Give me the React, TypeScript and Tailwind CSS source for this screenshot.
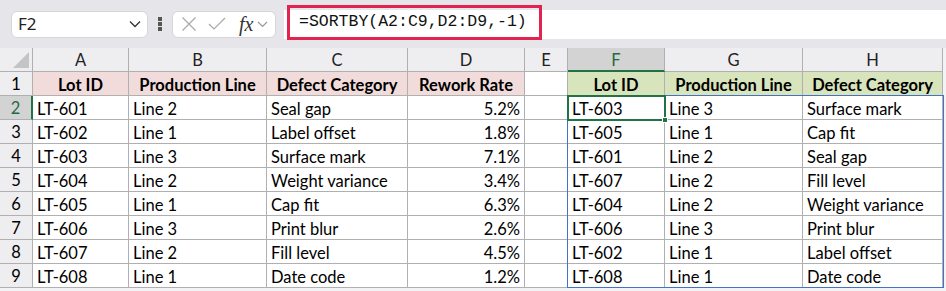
import React from "react";

const cols = ["A", "B", "C", "D", "E", "F", "G", "H"];

const left = [
    ["LT-601", "Line 2", "Seal gap", "5.2%"],
    ["LT-602", "Line 1", "Label offset", "1.8%"],
    ["LT-603", "Line 3", "Surface mark", "7.1%"],
    ["LT-604", "Line 2", "Weight variance", "3.4%"],
    ["LT-605", "Line 1", "Cap fit", "6.3%"],
    ["LT-606", "Line 3", "Print blur", "2.6%"],
    ["LT-607", "Line 2", "Fill level", "4.5%"],
    ["LT-608", "Line 1", "Date code", "1.2%"],
];

const right = [
    ["LT-603", "Line 3", "Surface mark"],
    ["LT-605", "Line 1", "Cap fit"],
    ["LT-601", "Line 2", "Seal gap"],
    ["LT-607", "Line 2", "Fill level"],
    ["LT-604", "Line 2", "Weight variance"],
    ["LT-606", "Line 3", "Print blur"],
    ["LT-602", "Line 1", "Label offset"],
    ["LT-608", "Line 1", "Date code"],
];

const cell = "h-[24px] border-r border-b border-[#b0b0b0] px-[4px] pt-[3px] flex items-center whitespace-nowrap overflow-hidden";
const head = "h-[24px] pt-[2px] flex items-center justify-center";

const Toolbar = () => (
    <div className="h-[48px] bg-[#e6e6ea] flex items-center relative">
        <div className="ml-[11px] w-[137px] h-[27px] bg-white rounded-md border border-[#d6d6da] flex items-center justify-between px-[6px]">
            <span className="text-[17px] text-[#222] font-['Noto_Sans',sans-serif]">F2</span>
            <svg width="12" height="8" viewBox="0 0 12 8"><path d="M1 1.5l5 5 5-5" fill="none" stroke="#333" strokeWidth="1.3" /></svg>
        </div>
        <div className="mx-[10px] flex flex-col gap-[1.5px]">
            <span className="w-[4px] h-[3.5px] bg-[#555]" />
            <span className="w-[4px] h-[3.5px] bg-[#555]" />
            <span className="w-[4px] h-[3.5px] bg-[#555]" />
        </div>
        <div className="w-[104px] h-[27px] bg-white rounded-md border border-[#d6d6da] flex items-center pl-[8px] gap-[11px]">
            <svg width="16" height="16" viewBox="0 0 16 16"><path d="M1.5 1.5l13 13M14.5 1.5l-13 13" stroke="#a8a8a8" strokeWidth="1.2" /></svg>
            <svg width="18" height="16" viewBox="0 0 18 16"><path d="M1 8l5 5L17 2" fill="none" stroke="#a8a8a8" strokeWidth="1.2" /></svg>
            <span className="italic text-[20px] leading-none text-[#333] font-['Liberation_Serif',serif] ml-[2px]">fx</span>
            <svg width="11" height="7" viewBox="0 0 11 7" className="-ml-[7px]"><path d="M1 1l4.5 4.5L10 1" fill="none" stroke="#999" strokeWidth="1.2" /></svg>
        </div>
        <div className="ml-[8px] flex-1 h-[29px] bg-white self-center" />
        <div className="absolute left-[287px] top-[5px] w-[255px] h-[35px] border-[3px] border-[#e2224f] flex items-center pl-[9px]">
            <span className="text-[16.5px] text-[#111] font-['Liberation_Mono',monospace]">=SORTBY(A2:C9,D2:D9,-1)</span>
        </div>
    </div>
);

const Sheet = () => (
    <div className="relative font-['Lato',sans-serif] text-[16.5px] text-black">
        <div className="grid grid-cols-[33px_96px_138px_141px_117px_43px_97px_138px_140px]">
            <div className="h-[24px] bg-[#eeeef1] border-r border-b border-[#b0b0b0] flex items-end justify-end p-[3px]">
                <svg width="16" height="16" viewBox="0 0 16 16"><path d="M16 0v16H0z" fill="#c4c4c4" /></svg>
            </div>
            {cols.map((c) => (
                <div
                    key={c}
                    className={
                        c === "F"
                            ? head + " bg-[#d3d3d3] border-r border-b-2 border-b-[#217346] border-r-[#b0b0b0] text-[#1e6b3e]"
                            : head + " bg-[#eeeef1] border-r border-b border-[#b0b0b0] text-[#222]"
                    }
                >
                    {c}
                </div>
            ))}

            <div className={head + " bg-[#eeeef1] border-r border-b border-[#b0b0b0]"}>1</div>
            {["Lot ID", "Production Line", "Defect Category", "Rework Rate"].map((h) => (
                <div key={h} className={cell + " bg-[#f2dcdb] justify-center font-bold"}>{h}</div>
            ))}
            <div className={cell + " bg-white"} />
            {["Lot ID", "Production Line", "Defect Category"].map((h) => (
                <div key={"r" + h} className={cell + " bg-[#d8e4bc] justify-center font-bold"}>{h}</div>
            ))}

            {left.map((row, i) => (
                <React.Fragment key={i}>
                    <div
                        className={
                            i === 0
                                ? head + " bg-[#d3d3d3] border-r-2 border-r-[#217346] border-b border-b-[#b0b0b0] text-[#1e6b3e]"
                                : head + " bg-[#eeeef1] border-r border-b border-[#b0b0b0]"
                        }
                    >
                        {i + 2}
                    </div>
                    <div className={cell + " bg-white"}>{row[0]}</div>
                    <div className={cell + " bg-white"}>{row[1]}</div>
                    <div className={cell + " bg-white"}>{row[2]}</div>
                    <div className={cell + " bg-white justify-end"}>{row[3]}</div>
                    <div className={cell + " bg-white"} />
                    <div className={cell + " bg-white"}>{right[i][0]}</div>
                    <div className={cell + " bg-white"}>{right[i][1]}</div>
                    <div className={cell + " bg-white"}>{right[i][2]}</div>
                </React.Fragment>
            ))}
        </div>
        {/* spill range outline */}
        <div className="absolute left-[567px] top-[47px] w-[377px] h-[193px] border border-[#4472c4] pointer-events-none" />
        {/* active cell */}
        <div className="absolute left-[567px] top-[47px] w-[99px] h-[26px] border-2 border-[#217346] pointer-events-none">
            <div className="absolute -right-[4px] -bottom-[4px] w-[6px] h-[6px] bg-[#217346] border border-white" />
        </div>
    </div>
);

export default function App() {
    return (
        <div className="w-[946px] h-[291px] overflow-hidden bg-[#f3f3f5]">
            <Toolbar />
            <Sheet />
        </div>
    );
}
